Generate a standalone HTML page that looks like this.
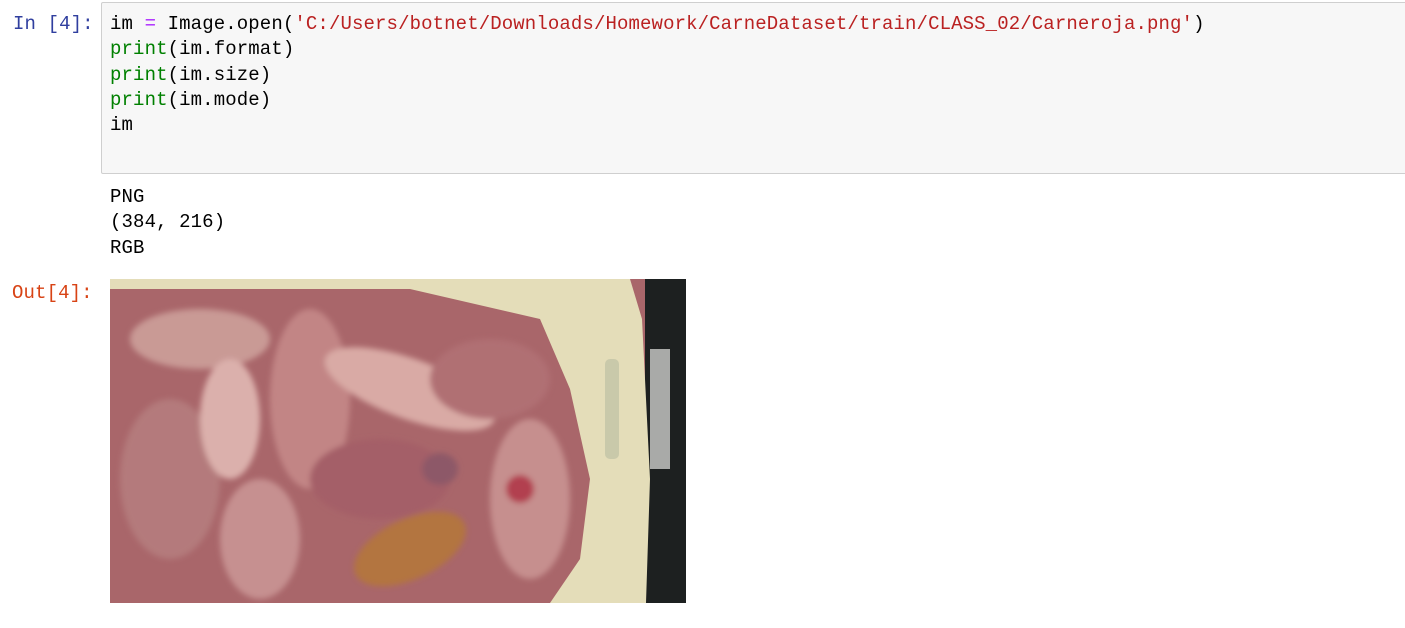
<!DOCTYPE html>
<html><head><meta charset="utf-8"><style>
body{margin:0;width:1405px;height:628px;background:#fff;overflow:hidden;position:relative;font-family:"Liberation Mono",monospace;font-size:19px;}
.l{position:absolute;white-space:pre;line-height:25.3px;letter-spacing:0.12px;}
.box{position:absolute;left:101px;top:2px;width:1310px;height:170px;background:#f7f7f7;border:1px solid #cfcfcf;border-radius:2px;}
.g{color:#008000}.s{color:#ba2121}.p{color:#aa22ff}
</style></head><body>
<div class="box"></div>
<div class="l" style="left:13px;top:12px;color:#303f9f">In [4]:</div>
<div class="l" style="left:110px;top:12px;color:#000">im <span class="p">=</span> Image.open(<span class="s">'C:/Users/botnet/Downloads/Homework/CarneDataset/train/CLASS_02/Carneroja.png'</span>)
<span class="g">print</span>(im.format)
<span class="g">print</span>(im.size)
<span class="g">print</span>(im.mode)
im</div>
<div class="l" style="left:110px;top:185px;color:#000">PNG
(384, 216)
RGB</div>
<div class="l" style="left:12px;top:281px;color:#d84315">Out[4]:</div>
<svg style="position:absolute;left:110px;top:279px" width="576" height="324" viewBox="0 0 576 324">
<defs><filter id="b"><feGaussianBlur stdDeviation="3"/></filter></defs>
<rect width="576" height="324" fill="#a9666a"/>
<rect x="535" y="0" width="41" height="324" fill="#1d2020"/>
<path d="M0 0 L520 0 L532 40 L540 200 L536 324 L440 324 L470 280 L480 200 L460 110 L430 40 L300 10 L0 10Z" fill="#e4ddb9"/>
<rect x="495" y="80" width="14" height="100" rx="5" fill="#c9c9aa"/>
<rect x="540" y="70" width="20" height="120" fill="#a9aaa8"/>
<g filter="url(#b)">
<ellipse cx="90" cy="60" rx="70" ry="30" fill="#c99a95"/>
<ellipse cx="200" cy="120" rx="40" ry="90" fill="#c28585"/>
<ellipse cx="300" cy="110" rx="90" ry="30" fill="#d9aaa5" transform="rotate(20 300 110)"/>
<ellipse cx="380" cy="100" rx="60" ry="40" fill="#b06f73"/>
<ellipse cx="60" cy="200" rx="50" ry="80" fill="#b47a7c"/>
<ellipse cx="150" cy="260" rx="40" ry="60" fill="#c69090"/>
<ellipse cx="420" cy="220" rx="40" ry="80" fill="#c68f8e"/>
<ellipse cx="300" cy="270" rx="60" ry="30" fill="#b3743f" transform="rotate(-25 300 270)"/>
<ellipse cx="270" cy="200" rx="70" ry="40" fill="#a45e68"/>
<ellipse cx="120" cy="140" rx="30" ry="60" fill="#dbb0ac"/>
<ellipse cx="410" cy="210" rx="14" ry="14" fill="#b2404f"/>
<ellipse cx="330" cy="190" rx="18" ry="16" fill="#8d5868"/>
</g>
</svg>
</body></html>
